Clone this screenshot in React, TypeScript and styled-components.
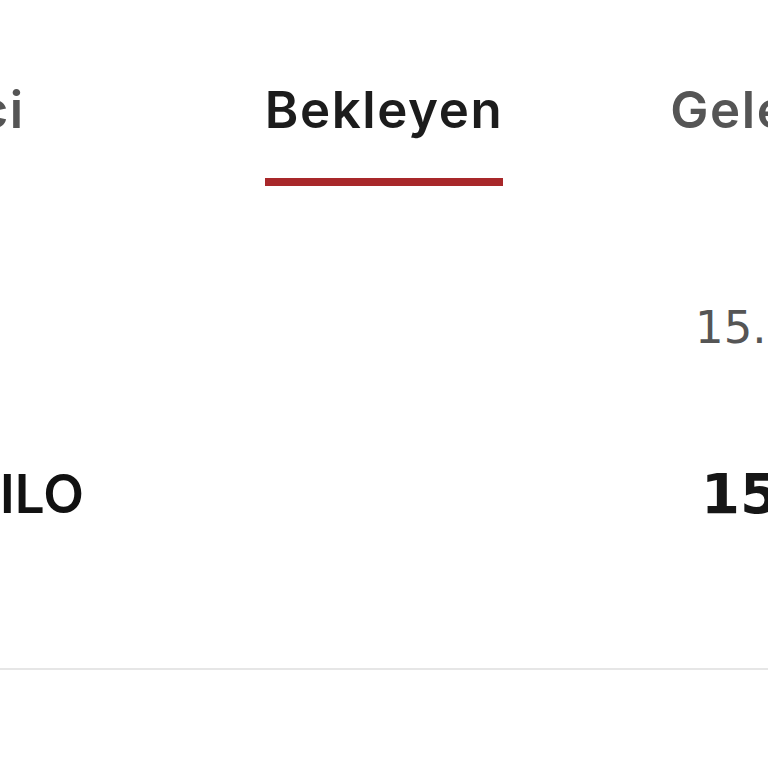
import React from "react"
import styled, { createGlobalStyle } from "styled-components"

const GlobalStyle = createGlobalStyle`
    html, body {
        margin:0;
        padding:0;
        background:#ffffff;
    }
    body {
        width:768px;
        height:768px;
        overflow:hidden;
        font-family:Inter, "Liberation Sans", sans-serif;
    }
`

const Screen = styled.div`
    width:768px;
    height:768px;
    overflow:hidden;
    display:flex;
    flex-direction:column;
`

const TabBar = styled.div`
    display:flex;
    align-items:flex-start;
    padding-top:80px;
    height:108px;
`

const SideTab = styled.div<{ $side:"left" | "right" }>`
    flex:1 1 0;
    min-width:0;
    display:flex;
    justify-content:${(p) => (p.$side === "left" ? "flex-end" : "flex-start")};
    overflow:hidden;
    white-space:nowrap;
`

const Tab = styled.div<{ $gapLeft?:number; $gapRight?:number }>`
    display:flex;
    flex-direction:column;
    align-items:stretch;
    gap:38px;
    flex:none;
    margin-left:${(p) => p.$gapLeft ?? 0}px;
    margin-right:${(p) => p.$gapRight ?? 0}px;
`

const TabLabel = styled.span<{ $active?:boolean }>`
    font-size:51px;
    line-height:60px;
    font-weight:600;
    letter-spacing:1.6px;
    color:${(p) => (p.$active ? "#1c1c1c" : "#555555")};
`

const Indicator = styled.div`
    height:8px;
    background:#a8282a;
`

const Item = styled.div`
    margin-top:110px;
    display:flex;
    flex-direction:column;
    gap:106px;
    padding-bottom:144px;
    border-bottom:2px solid #e6e6e6;
`

const Row = styled.div`
    display:grid;
    grid-template-columns:1fr 73px;
    align-items:baseline;
`

const Name = styled.span`
    font-size:53px;
    line-height:60px;
    font-weight:600;
    color:#111111;
    white-space:nowrap;
`

const Value = styled.span<{ $muted?:boolean }>`
    font-family:"DejaVu Sans", sans-serif;
    font-size:${(p) => (p.$muted ? "45px" : "56px")};
    line-height:60px;
    font-weight:${(p) => (p.$muted ? 400 : 600)};
    color:${(p) => (p.$muted ? "#555555" : "#161616")};
    padding-left:${(p) => (p.$muted ? "0" : "6px")};
    white-space:nowrap;
`

export default function App() {
    return (
        <Screen>
            <GlobalStyle />
            <TabBar>
                <SideTab $side="left">
                    <Tab $gapRight={240}>
                        <TabLabel>Geçici</TabLabel>
                    </Tab>
                </SideTab>
                <Tab>
                    <TabLabel $active>Bekleyen</TabLabel>
                    <Indicator />
                </Tab>
                <SideTab $side="right">
                    <Tab $gapLeft={167}>
                        <TabLabel>Gelecek</TabLabel>
                    </Tab>
                </SideTab>
            </TabBar>
            <Item>
                <Row>
                    <span />
                    <Value $muted>15.03.2024</Value>
                </Row>
                <Row>
                    <Name>ILO</Name>
                    <Value>15.400,00</Value>
                </Row>
            </Item>
        </Screen>
    )
}
